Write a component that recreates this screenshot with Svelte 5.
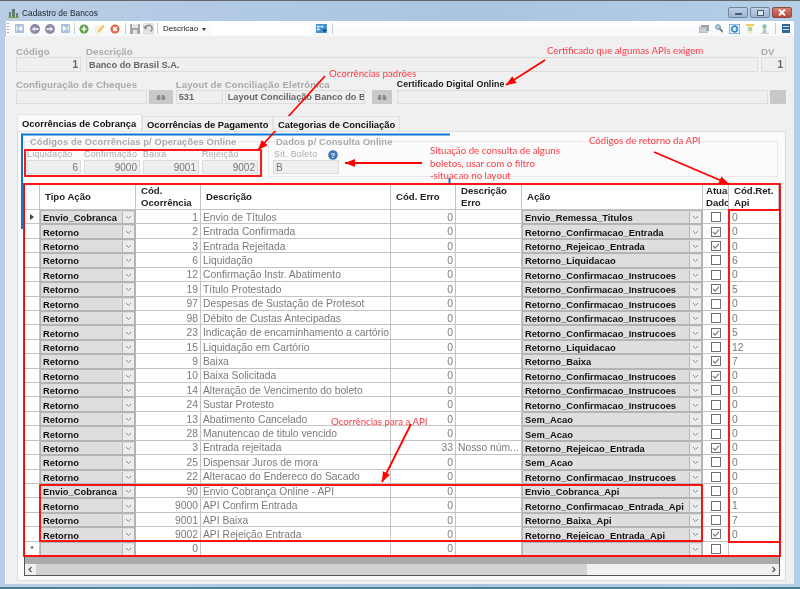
<script lang="ts">
  const yes = true;
  const CONF = "Retorno_Confirmacao_Instrucoes";
  const rows = [
    { tipo: "Envio_Cobranca", cod: 1, desc: "Envio de Títulos", acao: "Envio_Remessa_Titulos", api: "0" },
    { tipo: "Retorno", cod: 2, desc: "Entrada Confirmada", acao: "Retorno_Confirmacao_Entrada", chk: yes, api: "0" },
    { tipo: "Retorno", cod: 3, desc: "Entrada Rejeitada", acao: "Retorno_Rejeicao_Entrada", chk: yes, api: "0" },
    { tipo: "Retorno", cod: 6, desc: "Liquidação", acao: "Retorno_Liquidacao", api: "6" },
    { tipo: "Retorno", cod: 12, desc: "Confirmação Instr. Abatimento", acao: CONF, api: "0" },
    { tipo: "Retorno", cod: 19, desc: "Título Protestado", acao: CONF, chk: yes, api: "5" },
    { tipo: "Retorno", cod: 97, desc: "Despesas de Sustação de Protesot", acao: CONF, api: "0" },
    { tipo: "Retorno", cod: 98, desc: "Débito de Custas Antecipadas", acao: CONF, api: "0" },
    { tipo: "Retorno", cod: 23, desc: "Indicação de encaminhamento a cartório", acao: CONF, chk: yes, api: "5" },
    { tipo: "Retorno", cod: 15, desc: "Liquidação em Cartório", acao: "Retorno_Liquidacao", api: "12" },
    { tipo: "Retorno", cod: 9, desc: "Baixa", acao: "Retorno_Baixa", chk: yes, api: "7" },
    { tipo: "Retorno", cod: 10, desc: "Baixa Solicitada", acao: CONF, chk: yes, api: "0" },
    { tipo: "Retorno", cod: 14, desc: "Alteração de Vencimento do boleto", acao: CONF, api: "0" },
    { tipo: "Retorno", cod: 24, desc: "Sustar Protesto", acao: CONF, api: "0" },
    { tipo: "Retorno", cod: 13, desc: "Abatimento Cancelado", acao: "Sem_Acao", api: "0" },
    { tipo: "Retorno", cod: 28, desc: "Manutencao de titulo vencido", acao: "Sem_Acao", api: "0" },
    { tipo: "Retorno", cod: 3, desc: "Entrada rejeitada", erro: 33, descErro: "Nosso núm...", acao: "Retorno_Rejeicao_Entrada", chk: yes, api: "0" },
    { tipo: "Retorno", cod: 25, desc: "Dispensar Juros de mora", acao: "Sem_Acao", api: "0" },
    { tipo: "Retorno", cod: 22, desc: "Alteracao do Endereco do Sacado", acao: CONF, api: "0" },
    { tipo: "Envio_Cobranca", cod: 90, desc: "Envio Cobrança Online - API", acao: "Envio_Cobranca_Api", api: "0" },
    { tipo: "Retorno", cod: 9000, desc: "API Confirm Entrada", acao: "Retorno_Confirmacao_Entrada_Api", api: "1" },
    { tipo: "Retorno", cod: 9001, desc: "API Baixa", acao: "Retorno_Baixa_Api", api: "7" },
    { tipo: "Retorno", cod: 9002, desc: "API Rejeição Entrada", acao: "Retorno_Rejeicao_Entrada_Api", chk: yes, api: "0" },
    { tipo: "", cod: 0, desc: "", acao: "", api: "" },
  ];
  const codes = [
    { label: "Liquidação", value: 6 },
    { label: "Confirmação", value: 9000 },
    { label: "Baixa", value: 9001 },
    { label: "Rejeição", value: 9002 },
  ];
  const arrows = [
    [325, 76, 258, 150],
    [545, 60, 506, 85],
    [422, 163, 345, 163],
    [654, 152, 729, 184],
    [411, 424, 382, 482],
  ];
  const boxes = [
    [25, 150, 236, 26],
    [24, 184, 756, 372],
    [729, 210, 51, 332],
    [40, 485, 662, 56],
  ];

  function head(a: number[]) {
    const [x1, y1, x2, y2] = a;
    const t = Math.atan2(y2 - y1, x2 - x1);
    const p = (d: number, o: number) => `${x2 - d * Math.cos(t) - o * Math.sin(t)},${y2 - d * Math.sin(t) + o * Math.cos(t)}`;
    return `${x2},${y2} ${p(10, 4)} ${p(10, -4)}`;
  }
</script>

{#snippet binoculars()}
  <svg width="10" height="7" viewBox="0 0 12 8"><circle cx="3" cy="5" r="2.400" fill="#8a8a8a" /><circle cx="9" cy="5" r="2.400" fill="#8a8a8a" /><rect x="2" y="1" width="3" height="3" fill="#8a8a8a" /><rect x="7" y="1" width="3" height="3" fill="#8a8a8a" /></svg>
{/snippet}

{#snippet chevron()}
  <svg width="7" height="5" viewBox="0 0 7 5"><path d="M1 1l2.500 2.500L6 1" fill="none" stroke="#8d8d8d" /></svg>
{/snippet}

<div class="window">
  <header class="title">
    <svg class="appicon" width="11" height="10" viewBox="0 0 11 10"><path d="M1 9V4h2v5zM4 9V1h3v8zM8 9V5h2v4z" fill="#5f7f76" /><path d="M0 9h11v1H0z" fill="#8ba13e" /></svg>
    <span>Cadastro de Bancos</span>
    <div class="winbtns">
      <span class="wb"><i class="min"></i></span>
      <span class="wb"><i class="max"></i></span>
      <span class="wb close">
        <svg width="8" height="7" viewBox="0 0 8 7"><path d="M1 .5l6 6M7 .5l-6 6" stroke="#fff" stroke-width="1.800" /></svg>
      </span>
    </div>
  </header>

  <div class="toolbar">
    <span class="grip"></span>
    <svg class="tb" width="9" height="9" viewBox="0 0 10 10"><rect width="10" height="10" rx="1" fill="#a9c0dc" /><path d="M2 2v6M7.500 2.500L4 5l3.500 2.500z" fill="#fff" stroke="#fff" /></svg>
    <svg class="tb" width="10" height="10" viewBox="0 0 10 10"><circle cx="5" cy="5" r="5" fill="#8f88a6" /><path d="M1.500 5L5 2.500v5zM5 4h3.500v2H5z" fill="#e3e1ea" /></svg>
    <svg class="tb" width="10" height="10" viewBox="0 0 10 10"><circle cx="5" cy="5" r="5" fill="#8f88a6" /><path d="M8.500 5L5 2.500v5zM5 4H1.500v2H5z" fill="#e3e1ea" /></svg>
    <svg class="tb" width="9" height="9" viewBox="0 0 10 10"><rect width="10" height="10" rx="1" fill="#a9c0dc" /><path d="M8 2v6M2.500 2.500L6 5 2.500 7.500z" fill="#fff" stroke="#fff" /></svg>
    <span class="sep"></span>
    <svg class="tb" width="10" height="10" viewBox="0 0 12 12"><circle cx="6" cy="6" r="5.500" fill="#5da648" /><path d="M3 6h6M6 3v6" stroke="#fff" stroke-width="2" /></svg>
    <svg class="tb" width="10" height="10" viewBox="0 0 11 11"><rect y="2" width="8" height="9" fill="#f3efd9" /><path d="M3 8l6-7 1.500 1.200-6 7z" fill="#e8b83a" /></svg>
    <svg class="tb" width="10" height="10" viewBox="0 0 12 12"><circle cx="6" cy="6" r="5.500" fill="#dd6a4c" /><path d="M3.800 3.800l4.400 4.400M8.200 3.800L3.800 8.200" stroke="#fff" stroke-width="2" /></svg>
    <span class="sep"></span>
    <svg class="tb save" width="10" height="10" viewBox="0 0 10 10"><rect width="10" height="10" fill="#a5a5a5" /><rect x="2" y="0" width="6" height="4" fill="#e6e6e6" /><rect x="3" y="6" width="4" height="4" fill="#e6e6e6" /></svg>
    <span class="undo"><svg width="10" height="9" viewBox="0 0 12 10"><path d="M3 5a4 4 0 1 1 6 3.500" fill="none" stroke="#8f8f8f" stroke-width="1.800" /><path d="M0 3l3.800 3.800L5 1.500z" fill="#8f8f8f" /></svg></span>
    <span class="sep"></span>
    <span class="combo-label">Descricao</span>
    <span class="caret"></span>
    <span class="search"></span>
    <svg class="tb" width="11" height="9" viewBox="0 0 12 10"><rect width="12" height="10" fill="#3f8fd0" /><path d="M1 2h3v2H1zM5 2h3v2H5zM1 5h3v2H1z" fill="#e6f2fb" /><path d="M7 6h5l-2.500 3.500z" fill="#123f78" /></svg>
    <span class="sep"></span>
    <span class="spacer"></span>
    <svg class="tr" width="10" height="8" viewBox="0 0 10 8"><rect x="2" width="8" height="6" fill="#9ba3ad" /><rect y="2" width="8" height="6" fill="#c9ced4" stroke="#8f969e" stroke-width=".6" /></svg>
    <svg class="tr" width="8" height="9" viewBox="0 0 8 9"><circle cx="3" cy="3" r="2.300" fill="#b7d3e6" stroke="#6b8da8" /><path d="M4.500 4.500L8 8" stroke="#6d7f8d" stroke-width="1.800" /></svg>
    <svg class="tr" width="11" height="10" viewBox="0 0 11 10"><rect width="11" height="10" fill="#eaf2fa" stroke="#3a78b8" /><circle cx="5.500" cy="5" r="2.800" fill="none" stroke="#2e8dd0" stroke-width="1.800" /></svg>
    <svg class="tr" width="8" height="10" viewBox="0 0 8 10"><rect width="8" height="2" fill="#e8d25a" /><rect x="1" y="2" width="6" height="8" fill="#eef0d8" /><path d="M2 4h4M2 6h4" stroke="#90b070" /></svg>
    <svg class="tr" width="9" height="10" viewBox="0 0 9 10"><circle cx="4.500" cy="2.500" r="2.300" fill="#8fc0b0" /><path d="M2 10l1.500-6h2L7 10z" fill="#a8cfc2" /><path d="M0 9h9v1H0z" fill="#d5d5c8" /></svg>
    <span class="sep last"></span>
    <svg class="tr end" width="8" height="9" viewBox="0 0 8 9"><rect width="8" height="9" fill="#32659c" /><path d="M1 2.500h6M1 5.500h6" stroke="#cfe0f0" /></svg>
  </div>

  <main class="form">
    <div class="line first">
      <label class="f w65">Código<span class="box num">1</span></label>
      <label class="f w672">Descrição<span class="box dark">Banco do Brasil S.A.</span></label>
      <label class="f w25">DV<span class="box num">1</span></label>
    </div>
    <div class="line second">
      <label class="f w131">Configuração de Cheques<span class="box"></span></label>
      <span class="findbtn">{@render binoculars()}</span>
      <div class="layout f">
        <span>Layout de Conciliação Eletrônica</span>
        <div class="pair">
          <span class="box dark w47">531</span>
          <span class="box dark w140">Layout Conciliação Banco do B</span>
        </div>
      </div>
      <span class="findbtn w20">{@render binoculars()}</span>
      <label class="f cert"><b>Certificado Digital Online</b><span class="box"></span></label>
      <span class="findbtn w16">...</span>
    </div>

    <nav class="tabs">
      <span class="tab active">Ocorrências de Cobrança</span>
      <span class="tab t2">Ocorrências de Pagamento</span>
      <span class="tab t3">Categorias de Conciliação</span>
    </nav>

    <section class="panel">
      <div class="groups">
        <fieldset class="group g1">
          <legend>Códigos de Ocorrências p/ Operações Online</legend>
          <div class="codes">
            {#each codes as c}
              <label class="f sm">{c.label}<span class="box num">{c.value}</span></label>
            {/each}
          </div>
        </fieldset>
        <fieldset class="group g2">
          <legend>Dados p/ Consulta Online</legend>
          <label class="f sm sit">
            <span class="sitlabel">Sit. Boleto
              <svg width="10" height="10" viewBox="0 0 10 10"><circle cx="5" cy="5" r="4.800" fill="#3f78b8" /><text x="5" y="8" text-anchor="middle" class="q">?</text></svg>
            </span>
            <span class="box">B</span>
          </label>
        </fieldset>
      </div>

      <div class="grid">
        <div class="row headrow">
          <span class="c"></span>
          <span class="c th"><span>Tipo Ação</span></span>
          <span class="c th"><span>Cód.<br />Ocorrência</span></span>
          <span class="c th"><span>Descrição</span></span>
          <span class="c th"><span>Cód. Erro</span></span>
          <span class="c th"><span>Descrição<br />Erro</span></span>
          <span class="c th"><span>Ação</span></span>
          <span class="c th clip"><span>Atual<br />Dados</span></span>
          <span class="c th"><span>Cód.Ret.<br />Api</span></span>
        </div>
        {#each rows as r, i}
          <div class="row body">
            <span class="c mark">
              {#if i === 0}<i class="cur"></i>{:else if i === rows.length - 1}<i class="star">*</i>{/if}
            </span>
            <span class="c combo"><b>{r.tipo}</b><span class="drop">{@render chevron()}</span></span>
            <span class="c n">{r.cod}</span>
            <span class="c t">{r.desc}</span>
            <span class="c n">{r.erro ?? 0}</span>
            <span class="c t">{r.descErro ?? ""}</span>
            <span class="c combo"><b>{r.acao}</b><span class="drop">{@render chevron()}</span></span>
            <span class="c chkcell">
              <svg width="10" height="10" viewBox="0 0 10 10"><rect x=".5" y=".5" width="9" height="9" fill="#fff" stroke="#6e6e6e" />{#if r.chk}<path d="M2 5l2.200 2.200L8 2.500" fill="none" stroke="#777" stroke-width="1.100" />{/if}</svg>
            </span>
            <span class="c t api">{r.api}</span>
          </div>
        {/each}
        <div class="empty"></div>
        <div class="hscroll">
          <svg width="11" height="11" viewBox="0 0 11 11"><path d="M6.500 3L4 5.500 6.500 8" fill="none" stroke="#555" stroke-width="1.200" /></svg>
          <span class="thumb"></span>
          <svg width="11" height="11" viewBox="0 0 11 11"><path d="M4.500 3L7 5.500 4.500 8" fill="none" stroke="#555" stroke-width="1.200" /></svg>
        </div>
      </div>
    </section>
  </main>

  <svg class="marks" width="800" height="589" viewBox="0 0 800 589">
    <path d="M21 134.500H450M22 134v95M449.500 178v6" fill="none" stroke="#0a78d2" stroke-width="2" />
    {#each boxes as b}
      <rect x={b[0]} y={b[1]} width={b[2]} height={b[3]} fill="none" stroke="#f00" stroke-width="1.800" />
    {/each}
    {#each arrows as a}
      <line x1={a[0]} y1={a[1]} x2={a[2]} y2={a[3]} stroke="#f00" stroke-width="1.800" />
      <polygon points={head(a)} fill="#f00" />
    {/each}
  </svg>
  <span class="note" style="left:329px;top:66px">Ocorrências padrões</span>
  <span class="note" style="left:547px;top:43px">Certificado que algumas APIs exigem</span>
  <span class="note" style="left:430px;top:143px">Situação de consulta de alguns<br />boletos, usar com o filtro<br />-situacao no layout</span>
  <span class="note" style="left:589px;top:133px">Códigos de retorno da API</span>
  <span class="note" style="left:331px;top:414px">Ocorrências para a API</span>
</div>

<style>
  :global(body) {
    margin: 0;
    background: #a9cbe6;
  }

  .window {
    position: relative;
    width: 800px;
    height: 589px;
    overflow: hidden;
    box-sizing: border-box;
    padding: 0 6px 3px;
    display: flex;
    flex-direction: column;
    font-family: "Liberation Sans", Arial, sans-serif;
    font-size: 10.300px;
    background: linear-gradient(90deg, #b9cee6 0%, #a9c5e2 60%, #b5cfe6 100%);
    border-top: 1px solid #666;
    border-bottom: 2px solid #4f7f95;
    filter: blur(0.4px);
  }

  .title {
    height: 20px;
    padding-top: 3px;
    box-sizing: border-box;
    flex: none;
    display: flex;
    align-items: center;
    color: #1c2530;
    font-size: 8.400px;
  }

  .appicon {
    margin: 0 3px 0 2px;
  }

  .winbtns {
    margin-left: auto;
    margin-right: 2px;
    display: flex;
    gap: 2px;
  }

  .wb {
    width: 20px;
    height: 11px;
    border: 1px solid #6f87a3;
    box-sizing: border-box;
    border-radius: 2px;
    background: linear-gradient(#bed0e4, #9fb6cf);
    display: flex;
    align-items: center;
    justify-content: center;
  }

  .wb.close {
    background: linear-gradient(#d8806c, #b9483a);
    border-color: #8f4a45;
  }

  .min {
    width: 7px;
    height: 2px;
    margin-top: 3px;
    background: #fff;
    border: 1px solid #4a5d75;
    box-sizing: border-box;
  }

  .max {
    width: 7px;
    height: 6px;
    border: 1.500px solid #4a5d75;
    box-sizing: border-box;
    background: #dfe8f1;
  }

  .toolbar {
    height: 15px;
    flex: none;
    background: linear-gradient(#ffffff, #f7f8fa);
    display: flex;
    align-items: center;
    font-size: 7.900px;
    color: #222;
    padding-right: 4px;
  }

  .grip {
    width: 2px;
    height: 11px;
    margin: 0 6px 0 1px;
    background: repeating-linear-gradient(#9aa5b2 0 1px, transparent 1px 3px);
  }

  .tb {
    margin-right: 5.500px;
    flex: none;
  }

  .tb.save {
    margin-right: 3px;
  }

  .undo {
    width: 11px;
    height: 12px;
    background: #e2e2e2;
    display: flex;
    align-items: center;
    justify-content: center;
    margin-right: 4px;
  }

  .sep {
    width: 1px;
    height: 11px;
    background: #c9ced6;
    margin: 0 4px 0 -1px;
    flex: none;
  }

  .sep.last {
    margin: 0 0 0 6px;
  }

  .combo-label {
    margin-left: 1.500px;
  }

  .caret {
    width: 0;
    height: 0;
    margin: 1px 5px 0 4px;
    border: 2px solid transparent;
    border-top: 3px solid #333;
    border-bottom: 0;
  }

  .search {
    width: 99px;
    height: 12px;
    background: #fff;
    margin-right: 6px;
  }

  .spacer {
    flex: 1;
  }

  .tr {
    margin-left: 6px;
    flex: none;
  }

  .form {
    flex: 1;
    min-height: 0;
    background: #f0f0f0;
    padding: 10px 8px 0 10px;
    display: flex;
    flex-direction: column;
    border-left: 1px solid #f8f9fb;
    margin-left: -1px;
  }

  .line {
    display: flex;
    align-items: flex-end;
  }

  .f {
    display: flex;
    flex-direction: column;
    color: #a9a9a9;
    font-size: 9.600px;
    line-height: 11px;
    font-weight: 700;
    letter-spacing: 0.1px;
    white-space: nowrap;
  }

  .box {
    display: block;
    height: 15px;
    line-height: 14px;
    box-sizing: border-box;
    border: 1px solid #dcdcdc;
    background: #efefef;
    color: #8a8a8a;
    padding: 0 2px;
    white-space: nowrap;
    overflow: hidden;
    font-size: 10px;
    font-weight: 400;
    letter-spacing: 0;
  }

  .num {
    text-align: right;
  }

  .dark {
    color: #666;
    font-weight: 700;
    font-size: 9.200px;
  }

  .first {
    gap: 5px;
  }

  .w65 { width: 65px; }
  .w672 { width: 672px; }
  .w25 { width: 25px; margin-left: -2px; }
  .w131 { width: 131px; }
  .w47 { width: 47px; }
  .w140 { width: 140px; }

  .first .num {
    color: #666;
    font-weight: 700;
  }

  .second {
    margin-top: 7px;
  }

  .second .box {
    height: 14px;
    line-height: 13px;
  }

  .findbtn {
    width: 24px;
    height: 14px;
    margin-left: 2px;
    background: #c9c9c9;
    display: flex;
    align-items: center;
    justify-content: center;
    color: #9a9a9a;
    font-size: 8px;
    flex: none;
  }

  .findbtn.w20 {
    width: 20px;
    margin-left: 7px;
  }

  .findbtn.w16 {
    width: 16px;
  }

  .layout {
    margin-left: 3px;
    width: 189px;
  }

  .pair {
    display: flex;
    gap: 2px;
  }

  .cert {
    width: 372px;
    margin-left: 5px;
  }

  .cert b {
    color: #1a1a1a;
    font-size: 8.800px;
  }

  .tabs {
    display: flex;
    margin: 11px 0 0 1px;
    height: 16px;
    font-weight: 700;
    font-size: 9.400px;
    color: #111;
    position: relative;
    z-index: 1;
  }

  .tab {
    width: 131px;
    height: 15px;
    margin-top: 1px;
    box-sizing: border-box;
    padding: 2px 0 0 4px;
    background: #f0f0f0;
    border: 1px solid #e2e2e2;
    border-bottom: 0;
    white-space: nowrap;
    overflow: hidden;
  }

  .tab.active {
    width: 125px;
    height: 17px;
    margin-top: -1px;
    padding: 3px 0 0 4px;
    background: #fafafa;
  }

  .tab.t3 {
    width: 127px;
  }

  .panel {
    flex: 1;
    min-height: 0;
    margin-left: 1px;
    margin-bottom: 3px;
    box-sizing: border-box;
    background: #fbfbfb;
    border: 1px solid #dedede;
    padding: 4px 0 0 6px;
  }

  .groups {
    display: flex;
    gap: 5px;
  }

  .group {
    margin: 0;
    min-width: 0;
    box-sizing: border-box;
    height: 41px;
    padding: 2px 2px 0;
    border: 1px solid #e8e8e8;
    background: transparent;
  }

  .group legend {
    padding: 0;
    margin-left: 3px;
    line-height: 11px;
    color: #a9a9a9;
    font-weight: 700;
    font-size: 9.400px;
    letter-spacing: 0.1px;
    background: #fbfbfb;
  }

  .g1 { width: 239px; }
  .g2 { width: 510px; padding-left: 4px; }

  .codes {
    display: grid;
    grid-template-columns: 54px 56px 56px 56px;
    gap: 3px;
  }

  .sm {
    font-size: 8.800px;
    font-weight: 400;
    color: #aaa;
    letter-spacing: 0.3px;
  }

  .sm .box {
    height: 14px;
    line-height: 13px;
    color: #777;
  }

  .sit {
    width: 66px;
  }

  .sitlabel {
    display: flex;
    align-items: flex-end;
    gap: 11px;
    margin-left: 1px;
  }

  .q {
    fill: #fff;
    font-size: 8px;
    font-weight: 700;
  }

  .grid {
    width: 756px;
    margin-top: 7px;
    box-sizing: border-box;
    background: #fff;
    border-right: 1px solid #555;
    border-bottom: 1px solid #555;
    border-left: 1px solid #555;
  }

  .row {
    display: grid;
    grid-template-columns: 15px 96px 65px 190px 65px 66px 181px 26px 1fr;
    height: 14.430px;
    color: #7a7a7a;
  }

  .headrow {
    height: 26px;
    color: #222;
  }

  .c {
    min-width: 0;
    box-sizing: border-box;
    border-right: 1px solid #c4c4c4;
    border-bottom: 1px solid #c4c4c4;
    overflow: hidden;
    white-space: nowrap;
    display: flex;
    align-items: center;
    line-height: 13px;
  }

  .body .c {
    padding-top: 1px;
  }

  .th {
    font-weight: 700;
    font-size: 9.600px;
    line-height: 12px;
    padding-left: 5px;
  }

  .clip {
    padding-left: 3px;
  }

  .n {
    justify-content: flex-end;
    padding-right: 2px;
  }

  .t {
    padding-left: 2px;
  }

  .api {
    padding-left: 3px;
    border-right: 0;
  }

  .combo {
    background: #dedede;
    border: 1px solid #b4b4b4;
    border-width: 1px 2px 1px 1px;
    color: #111;
    padding-left: 2px;
  }

  .combo b {
    flex: 1;
    font-weight: 700;
    font-size: 9.400px;
  }

  .drop {
    width: 11px;
    align-self: stretch;
    background: #ececec;
    border-left: 1px solid #b4b4b4;
    display: flex;
    align-items: center;
    justify-content: center;
    flex: none;
  }

  .mark {
    justify-content: center;
  }

  .cur {
    width: 0;
    height: 0;
    border: 3px solid transparent;
    border-left: 4px solid #444;
    border-right: 0;
  }

  .star {
    font-style: normal;
    color: #444;
    font-size: 8px;
    font-weight: 700;
  }

  .chkcell {
    justify-content: center;
  }

  .empty {
    height: 8px;
    background: #ababab;
  }

  .hscroll {
    height: 11px;
    background: #f0f0f0;
    display: flex;
    align-items: center;
    justify-content: space-between;
  }

  .thumb {
    width: 551px;
    height: 11px;
    background: #d2d2d2;
    margin-right: auto;
  }

  .marks {
    position: absolute;
    left: 0;
    top: -1px;
    pointer-events: none;
  }

  .note {
    position: absolute;
    color: #ff3b44;
    font-family: Lato, sans-serif;
    font-size: 9.700px;
    line-height: 12.500px;
    white-space: nowrap;
  }
</style>
